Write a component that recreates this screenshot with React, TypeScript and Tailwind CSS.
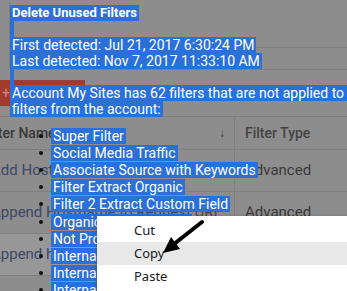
import React from 'react';

const sel = 'bg-[#2b6fd9] text-white';

const SelLine: React.FC<{ text?: string; bold?: boolean }> = ({ text, bold }) => (
  <div className="h-[16px] flex">
    {text ? (
      <span className={`${sel} px-[2px] h-[16px] leading-[16px] whitespace-nowrap ${bold ? 'font-bold text-[13px]' : ''}`}>{text}</span>
    ) : (
      <span className={`${sel} w-[4px] h-[16px]`} />
    )}
  </div>
);

const items = [
  'Super Filter',
  'Social Media Traffic',
  'Associate Source with Keywords',
  'Filter Extract Organic',
  'Filter 2 Extract Custom Field',
  'Organic Search Traffic',
  'Not Provided Keywords',
  'Internal Traffic Office',
  'Internal Traffic Home',
  'Internal IP Exclude',
];

const rows = [
  { name: 'Add Hostname to Request URI', type: 'Advanced', cls: '' },
  { name: 'Append Hostname to Request URI', type: 'Advanced', cls: '' },
  { name: 'Append hostname to URI', type: '', cls: 'bg-[#979797]' },
];

export default function App() {
  return (
    <div className="relative w-[347px] h-[291px] overflow-hidden bg-[#8d8d8d] font-['Roboto',sans-serif] text-[14px]">
      {/* dimmed page behind */}
      <div className="h-[48px] border-b border-[#7f7f7f] ml-[9px] border-l" />
      <div className="h-[22px] border-b border-[#7f7f7f] ml-[9px] border-l" />
      <div className="h-[47px] border-b border-[#7f7f7f] pt-[10px]">
        <div className="w-[85px] h-[26px] bg-[#a23a30] text-[#cf8a82] pl-[2px] leading-[26px]">+ Add Filter</div>
      </div>
      <div className="h-[33px] border-b border-[#7f7f7f] flex text-[#3a3a3a] font-medium">
        <div className="w-[235px] border-r border-[#7f7f7f] flex items-center pr-[9px] overflow-hidden">
          <span className="ml-[-17px] whitespace-nowrap">Filter Name</span>
          <span className="ml-auto text-[12px]">↓</span>
        </div>
        <div className="flex-1 flex items-center pl-[10px] text-[#444]">Filter Type</div>
      </div>
      {rows.map((r, i) => (
        <div key={i} className={`h-[42px] border-b border-[#7f7f7f] flex ${r.cls}`}>
          <div className="w-[235px] border-r border-[#7f7f7f] flex items-center overflow-hidden">
            <span className="ml-[-9px] whitespace-nowrap text-[#3c4766] text-[15px]">{r.name}</span>
          </div>
          <div className="flex-1 flex items-center pl-[10px] text-[#3a3a3a] text-[15px]">{r.type}</div>
        </div>
      ))}

      {/* selected tooltip text */}
      <div className="absolute left-[10px] top-[5px]">
        <SelLine text="Delete Unused Filters" bold />
        <SelLine />
        <SelLine text="First detected: Jul 21, 2017 6:30:24 PM" />
        <SelLine text="Last detected: Nov 7, 2017 11:33:10 AM" />
        <SelLine />
        <SelLine text="Account My Sites has 62 filters that are not applied to any" />
        <SelLine text="filters from the account:" />
        <ul className="mt-[10px] pl-[29px]">
          {items.map((t) => (
            <li key={t} className="h-[17.2px] flex items-center">
              <span className="w-[4px] h-[4px] rounded-full bg-[#111] mr-[8px] shrink-0" />
              <span className={`${sel} px-[2px] h-[16px] leading-[16px] whitespace-nowrap`}>{t}</span>
            </li>
          ))}
        </ul>
      </div>

      {/* context menu */}
      <div className="absolute left-[97px] top-[216px] w-[260px] h-[90px] bg-white shadow-[0_1px_4px_rgba(0,0,0,0.3)] pt-[3px] font-['Noto_Sans',sans-serif] text-[13px] text-[#1a1a1a]">
        <div className="h-[23px] flex items-center pl-[37px]">Cut</div>
        <div className="h-[23px] flex items-center pl-[37px] bg-[#e8e8e8]">Copy</div>
        <div className="h-[23px] flex items-center pl-[37px]">Paste</div>
      </div>

      {/* pointer arrow */}
      <svg className="absolute left-0 top-0" width="347" height="291" viewBox="0 0 347 291">
        <line x1="202" y1="222" x2="174" y2="244" stroke="#000" strokeWidth="4" strokeLinecap="round" />
        <polygon points="163,253 171,237 180,249" fill="#000" />
      </svg>
    </div>
  );
}
